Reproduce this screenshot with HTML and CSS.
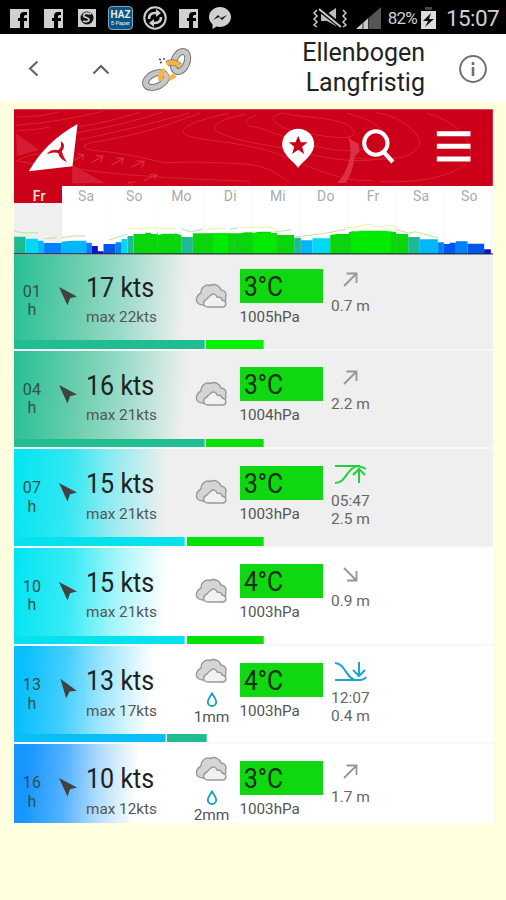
FILE: index.html
```html
<!DOCTYPE html>
<html lang="de">
<head>
<meta charset="utf-8">
<title>Ellenbogen Langfristig</title>
<link rel="stylesheet" href="styles.css">
</head>
<body>
<svg class="defs" width="0" height="0">
  <symbol id="fb" viewBox="0 0 19 19"><path fill="#d0d0d0" d="M0 0h19v19h-5v-7h3V9h-3V7.500q0-1.500 1.500-1.500H17V3h-3q-4 0-4 4v2H8v3h2v7H0z"/></symbol>
  <symbol id="wind" viewBox="0 0 20 20"><path fill="#404342" d="M1 1 19 10.500 12 12.300 9.500 19.500Z"/></symbol>
  <symbol id="cloud" viewBox="0 0 34 26"><path d="M8 22C3 22 1 19 1.500 16S4 11 6 10C6 4 11 1 15 2.500 20 0 25 3 26 7c4 0 6 4 4.500 7 1 4-1 7-4 8Z" fill="#d5d5d5" stroke="#999" stroke-width="1.400"/><path d="M13 24c-5 0-6-6-1-8 1-2 3-3 4-4 2-2 5-1 6 2 3 0 5 1 5 3 5 1 5 6 1 7Z" fill="#f1f1f1" stroke="#999" stroke-width="1.400"/></symbol>
  <symbol id="up" viewBox="0 0 15 15"><path d="M1 14 13.500 1.500M3.500 1.500h10V11" fill="none" stroke="#969696" stroke-width="1.800"/></symbol>
  <symbol id="down" viewBox="0 0 15 15"><path d="M1 1 13.500 13.500M13.500 4v9.500H4" fill="none" stroke="#969696" stroke-width="1.800"/></symbol>
  <symbol id="high" viewBox="0 0 33 21"><path d="M1 2h25M1 19c10 0 11-11 18-15 4-3 8-2 13 1M25 19V5M19 11l6-6 6 6" fill="none" stroke="#20d13a" stroke-width="2"/></symbol>
  <symbol id="low" viewBox="0 0 33 21"><path d="M1 2c10 0 12 17 21 17M1 19h25q4 0 6-3M25 1v14M19 9l6 6 6-6" fill="none" stroke="#1ba5cc" stroke-width="2"/></symbol>
  <symbol id="drop" viewBox="0 0 12 15"><path d="M6 1.500C4 5 1.800 7 1.800 10a4.200 4 0 0 0 8.400 0C10.200 7 8 5 6 1.500Z" fill="none" stroke="#169fc4" stroke-width="1.800"/></symbol>
</svg>

<div class="status">
  <div class="notes">
    <svg width="19" height="19"><use href="#fb"/></svg>
    <svg width="19" height="19"><use href="#fb"/></svg>
    <svg class="small" width="18" height="18" viewBox="0 0 18 18"><path fill="#d0d0d0" d="M0 0h18v18H0z"/><circle cx="9" cy="9" r="6.500" fill="#111"/><path d="M13 5Q6 3 5.500 6.500C5.500 9 11.500 8 11 11 10.500 13 7 13 5 12" fill="none" stroke="#d0d0d0" stroke-width="1.800"/></svg>
    <div class="haz"><b>HAZ</b><span>E-Paper</span></div>
    <svg width="24" height="24" viewBox="0 0 24 24"><circle cx="12" cy="12" r="10.700" fill="none" stroke="#d0d0d0" stroke-width="2"/><path d="M6 13q0-6 6-6h3M18 11q0 6-6 6H9" fill="none" stroke="#d0d0d0" stroke-width="2.600"/><path d="m13 3 5 4-5 4zM11 13l-5 4 5 4z" fill="#d0d0d0"/></svg>
    <svg width="19" height="19"><use href="#fb"/></svg>
    <svg class="messenger" width="22" height="22" viewBox="0 0 22 22"><path fill="#d0d0d0" d="M11 0C5 0 0 4.500 0 10c0 3 1.500 5.500 3.500 7.300V22l4-2.500c7 2 14.500-2.500 14.500-9.500C22 4.500 17 0 11 0"/><path d="m4 13 5-5 3 3 6-3-5 5-3-3z" fill="#111"/></svg>
  </div>
  <div class="state">
    <svg width="34" height="20" viewBox="0 0 34 20"><path d="M8 6h6l9-6v18l-9-5H8z" fill="#bbb"/><path d="m5 0 24 19" stroke="#000" stroke-width="5"/><path d="m6 1 22 18" stroke="#c9c9c9" stroke-width="2"/><path d="m4 2-3 3 3 3-3 3 3 3-3 3 3 2M30 2l3 3-3 3 3 3-3 3 3 3-3 2" fill="none" stroke="#c9c9c9" stroke-width="1.500"/></svg>
    <svg width="25" height="22" viewBox="0 0 25 22"><path d="M0 22 25 0v22z" fill="#555"/><path d="M0 22 13 10.500V22z" fill="#c9c9c9"/><path d="M7 15v7M12.500 11v11" stroke="#333" stroke-width="1"/></svg>
    <span class="percent">82%</span>
    <svg class="battery" width="15" height="22" viewBox="0 0 15 22"><path fill="#444" d="M4 0h7v3H4z"/><path fill="#ddd" d="M0 4h15v18H0z"/><path fill="#111" d="m10 6-8 8h5l-3 6 9-8H8z"/></svg>
    <span class="clock">15:07</span>
  </div>
</div>

<div class="appbar">
  <svg class="back" width="11" height="17" viewBox="0 0 11 17"><path d="M9.500 1.500 2 8.500l7.500 7" fill="none" stroke="#666" stroke-width="2.200"/></svg>
  <svg class="top" width="18" height="11" viewBox="0 0 18 11"><path d="m1.500 9.500 7.500-7.500 7.500 7.500" fill="none" stroke="#666" stroke-width="2.200"/></svg>
  <svg class="chain" width="50" height="44" viewBox="0 0 50 44"><g fill="none"><ellipse cx="38.500" cy="14.500" rx="6.500" ry="10.500" transform="rotate(22 38.500 14.500)" stroke="#777" stroke-width="7"/><ellipse cx="38.500" cy="14.500" rx="6.500" ry="10.500" transform="rotate(22 38.500 14.500)" stroke="#c6c6c6" stroke-width="5"/><ellipse cx="14" cy="33" rx="11" ry="6.500" transform="rotate(-24 14 33)" stroke="#777" stroke-width="7"/><ellipse cx="14" cy="33" rx="11" ry="6.500" transform="rotate(-24 14 33)" stroke="#c6c6c6" stroke-width="5"/><path d="M25 17q6-4 13 2" stroke="#a37630" stroke-width="6"/><path d="M25 17q6-4 13 2" stroke="#f7b34b" stroke-width="4.500"/><path d="M19 34q-2-8 4-11M27 32l6-4" stroke="#f7b34b" stroke-width="5"/><path d="m22 18 7 10" stroke="#fff" stroke-width="3"/><path d="m17 12 2 1M22 11v2M18 16l2-1" stroke="#555" stroke-width="1.500"/></g></svg>
  <div class="title">Ellenbogen<br>Langfristig</div>
  <svg class="info" width="30" height="30" viewBox="0 0 30 30"><circle cx="15" cy="15" r="12.900" fill="none" stroke="#707070" stroke-width="2"/><path d="M15 8v3M15 13v9" stroke="#707070" stroke-width="2.600"/></svg>
</div>

<main class="panel">
  <svg class="brand" viewBox="43.500 26 1435.500 231" preserveAspectRatio="none">
    <path fill="#cd0019" d="M43 26h1437v231H43z"/>
    <path d="M43 27h1437" stroke="#d94a50" stroke-width="4"/>
    <g fill="none" stroke="#df3449" stroke-width="2.500" opacity=".8">
      <path d="M50 50q70 0 130-16M50 75q130-10 260-42M50 92q70-5 100-12M230 80q90-12 190-44M228 98q150-25 260-62M240 118q150-30 330-80M600 38C470 90 380 110 270 128q-40 12 10 22C400 160 450 180 500 187q110-5 250 5 70 10 120 56"/>
      <path d="M690 38q-140 30-140 56c10 25 120 25 210 46 120 25 180 80 310 100h50"/>
      <path d="M740 42c-60 10-110 30-90 50 70 40 180 40 280 70 90 20 200 30 240 0M770 45c-40 10-40 35 0 35 70 20 240 100 340 60"/>
      <path d="M850 38c-60 10-20 50 70 60 100 20 160 20 140-10-30-40-160-35-210-50M1040 38c100 25 130 60 100 85"/>
      <path d="M1130 37c70 10 130 55 130 95-20 50-110 50-200 40M1280 38c130 35 160 130 110 160-60 40-160 50-250 45"/>
      <path d="M52 182q50-30 90-18M52 182q50 8 90 16M230 205q150 25 520 38"/>
    </g>
    <path d="M50 100l70 48-68 20zM218 195l100 54H218z" fill="#d51c34"/>
    <g fill="none" stroke="#e0384c" stroke-width="3"><path d="m226 180 25-16m-16-2 18 1-4 15M276 187l35-20m-22-1 22 1-8 18M336 194l37-20m-22-1 22 1-8 18M396 200l38-17m-23-1 24 1-9 18M433 241l38-17m-22-1 23 1-9 14M385 248l22-4"/></g>
    <path d="M1033 84c11 28 24 38 44 46l3 24-14 14c-5 36-14 60-28 80h-24c28-34 38-64 39-98-1-26-8-46-20-66Z" fill="#de2f43"/>
    <path d="M234 71Q136 126 88 213l131-15Z" fill="#fff"/>
    <path d="M183 122q20 10 4 32q6 18 15 32q-22-10-26-28q-16-4-34 4q10-16 35-13q12-12 6-27Z" fill="#c41020"/>
    <g transform="translate(5 0)"><path d="M891 203c-10-17-48-39-48-71a48 47 0 0 1 96 0c0 32-38 54-48 71Z" fill="#fff"/>
    <path d="m891 106 8 20h20l-16 13 6 22-18-13-18 13 6-22-16-13h20z" fill="#cd0019"/></g>
    <circle cx="1129" cy="128" r="35" fill="none" stroke="#fff" stroke-width="12"/><path d="m1151 153 29 32" stroke="#fff" stroke-width="13"/>
    <path d="M1312 100h101M1312 138h101M1312 176h101" stroke="#fff" stroke-width="15"/>
  </svg>

  <div class="days">
    <div class="day today"><span><em>Fr</em></span></div><div class="day"><em>Sa</em></div><div class="day"><em>So</em></div><div class="day"><em>Mo</em></div><div class="day"><em>Di</em></div><div class="day"><em>Mi</em></div><div class="day"><em>Do</em></div><div class="day"><em>Fr</em></div><div class="day"><em>Sa</em></div><div class="day"><em>So</em></div>
    <svg class="chart" viewBox="43.500 308 1435.500 158" preserveAspectRatio="none">
      <path fill="#1fba94" d="M44 412h34v52H44zM384 410h18v54h-18zM545 413h35v51h-35zM884 415h20v49h-20zM1226 413h35v51h-35z"/>
      <path fill="#00d8f5" d="M78 418h37v46H78zM366 419h18v45h-18zM939 417h53v47h-53z"/>
      <path fill="#00b7fa" d="M115 424h17v40h-17zM186 427l30-3h44v40h-74zM904 423h35v41h-35zM1261 420h54v44h-54z"/>
      <path fill="#0080fa" d="M132 431h54v33h-54zM260 430h17v34h-17zM348 429h18v35h-18zM1315 429h18v35h-18zM1369 426h35v38h-35z"/>
      <path fill="#0055ee" d="M312 434h36v30h-36zM1333 434h18v30h-18zM1351 430h18v34h-18zM1404 433h50v31h-50z"/>
      <path fill="#1010cd" d="M277 440h18v24h-18zM295 456h17v8h-17zM1454 450h20v14h-20z"/>
      <path fill="#08d60b" d="M402 404h35v-4h18v4h19v3l18-4h38l15 4v57H402zM580 402h145l10-3h24v65H580zM759 401l20-4h35v4h18v6h52v57h-125zM992 407l20-3h36v-6h30v-4h84v3h28v7h36v60H992z"/>
      <path fill="#00eb00" d="M640 402h45v62h-45zM760 402h72v62h-72zM1055 396h120v68h-120z"/>
      <path d="M474 400v64M529 400v64M617 402v62M705 402v62M832 405v59M1025 404v60M1055 398v66M1190 402v62" stroke="#39c43e" stroke-width="2"/>
      <path d="M44 395l22 5h50M135 418l35-3M186 415l40-5h32M330 422l52-17M545 388l30 10 35-9M690 390l25-4M825 398l50-7M890 412l80-9 70-13M1188 390l40 12 20-5 70 19" fill="none" stroke="#b4e8a4" stroke-width="3"/>
      <path d="M384 388l90-3 55 4M620 390l60-3M725 384h90l25 13M1035 385l30-1 40-10 20 6h15l8 5 10-6 15-1 20 8" fill="none" stroke="#eef2a0" stroke-width="3"/>
      <path d="M43 463.500h1437" stroke="#222c32" stroke-width="4"/>
    </svg>
  </div>

  <div class="rows">
    <section class="row night teal">
      <div class="hour">01<br>h</div><svg class="wind" width="20" height="20"><use href="#wind"/></svg>
      <div class="speed"><strong>17 kts</strong><span>max 22kts</span></div>
      <div class="sky"><svg width="34" height="26"><use href="#cloud"/></svg></div>
      <div class="air"><strong><span>3°C</span></strong><span>1005hPa</span></div>
      <div class="tide"><svg class="dir" width="15" height="15"><use href="#up"/></svg><span>0.7 m</span></div>
      <div class="bars"><i class="b-teal w17"></i><i class="b-lime g17"></i></div>
    </section>
    <section class="row night teal">
      <div class="hour">04<br>h</div><svg class="wind" width="20" height="20"><use href="#wind"/></svg>
      <div class="speed"><strong>16 kts</strong><span>max 21kts</span></div>
      <div class="sky"><svg width="34" height="26"><use href="#cloud"/></svg></div>
      <div class="air"><strong><span>3°C</span></strong><span>1004hPa</span></div>
      <div class="tide"><svg class="dir" width="15" height="15"><use href="#up"/></svg><span>2.2 m</span></div>
      <div class="bars"><i class="b-teal w17"></i><i class="b-green g17"></i></div>
    </section>
    <section class="row night cyan">
      <div class="hour">07<br>h</div><svg class="wind" width="20" height="20"><use href="#wind"/></svg>
      <div class="speed"><strong>15 kts</strong><span>max 21kts</span></div>
      <div class="sky"><svg width="34" height="26"><use href="#cloud"/></svg></div>
      <div class="air"><strong><span>3°C</span></strong><span>1003hPa</span></div>
      <div class="tide"><svg class="turn" width="33" height="21"><use href="#high"/></svg><span>05:47</span><span>2.5 m</span></div>
      <div class="bars"><i class="b-cyan w15"></i><i class="b-green g15"></i></div>
    </section>
    <section class="row cyan">
      <div class="hour">10<br>h</div><svg class="wind" width="20" height="20"><use href="#wind"/></svg>
      <div class="speed"><strong>15 kts</strong><span>max 21kts</span></div>
      <div class="sky"><svg width="34" height="26"><use href="#cloud"/></svg></div>
      <div class="air"><strong><span>4°C</span></strong><span>1003hPa</span></div>
      <div class="tide"><svg class="dir" width="15" height="15"><use href="#down"/></svg><span>0.9 m</span></div>
      <div class="bars"><i class="b-cyan w15"></i><i class="b-green g15"></i></div>
    </section>
    <section class="row sky-blue">
      <div class="hour">13<br>h</div><svg class="wind steep" width="20" height="20"><use href="#wind"/></svg>
      <div class="speed"><strong>13 kts</strong><span>max 17kts</span></div>
      <div class="sky rain"><svg width="34" height="26"><use href="#cloud"/></svg><svg class="drop" width="12" height="15"><use href="#drop"/></svg><span>1mm</span></div>
      <div class="air"><strong><span>4°C</span></strong><span>1003hPa</span></div>
      <div class="tide"><svg class="turn" width="33" height="21"><use href="#low"/></svg><span>12:07</span><span>0.4 m</span></div>
      <div class="bars"><i class="b-blue w13"></i><i class="b-teal g13"></i></div>
    </section>
    <section class="row blue">
      <div class="hour">16<br>h</div><svg class="wind" width="20" height="20"><use href="#wind"/></svg>
      <div class="speed"><strong>10 kts</strong><span>max 12kts</span></div>
      <div class="sky rain"><svg width="34" height="26"><use href="#cloud"/></svg><svg class="drop" width="12" height="15"><use href="#drop"/></svg><span>2mm</span></div>
      <div class="air"><strong><span>3°C</span></strong><span>1003hPa</span></div>
      <div class="tide"><svg class="dir" width="15" height="15"><use href="#up"/></svg><span>1.7 m</span></div>
    </section>
  </div>
</main>
</body>
</html>
```

FILE: styles.css
```css
* { box-sizing: border-box; }
body { margin: 0; width: 506px; height: 900px; overflow: hidden; background: #ffffdf; font-family: Roboto, "Liberation Sans", sans-serif; }
svg { display: block; flex: none; }
.defs { position: absolute; }

.status { height: 34px; background: #000; color: #d0d0d0; display: flex; justify-content: space-between; align-items: center; padding: 2px 6px 0 10px; }
.notes { display: flex; align-items: center; gap: 15px; }
.notes .small { margin-right: -3px; }
.notes .messenger { margin-left: -4.500px; }
.haz { width: 25px; height: 24px; margin-right: -5px; border: 1px solid #7baac4; border-radius: 4px; background: #0d5482; color: #e3eef5; text-align: center; }
.haz b { display: block; font-size: 10px; line-height: 11px; margin-top: 2px; }
.haz span { display: block; font-size: 5.5px; line-height: 7px; }
.notes > svg:nth-child(6) { margin-left: -3px; }
.notes { margin-top: 0; }
.state { display: flex; align-items: center; }
.state svg:first-child { margin-right: 0; }
.state svg + svg { margin-left: 9px; }
.percent { font-size: 17px; letter-spacing: -.8px; margin-left: 7px; }
.state .battery { margin-left: 4px; }
.clock { font-size: 22.500px; letter-spacing: -.6px; margin-left: 10px; width: 54px; white-space: nowrap; }

.appbar { height: 67px; background: #fff; display: flex; align-items: flex-start; padding-left: 28px; }
.back { margin-top: 26px; }
.top { margin: 30px 0 0 53px; }
.chain { margin: 13px 0 0 32px; }
.title { width: 233px; padding-top: 4px; text-align: right; font-size: 25px; line-height: 30px; color: #222; }
.info { margin: 20px 0 0 33px; }

.panel { width: 478.5px; height: 714.5px; margin: 7.5px 0 0 14px; overflow: hidden; background: #fff; }
.brand { width: 100%; height: 77px; }
.days { position: relative; z-index: 1; height: 69.5px; display: grid; grid-template-columns: repeat(10, 1fr); background: #fff; }
.day { font-size: 15.500px; line-height: 21px; height: 68px; color: #aaa; text-align: center; border-right: 1px solid #f7f7f7; }
.day em { display: inline-block; font-style: normal; transform: translateX(1px) scaleX(.9); letter-spacing: .3px; }
.today { color: #ffe3e3; background: #eeefee; border: 0; }
.today span { display: block; height: 17px; background: #cd0019; font-weight: 500; }
.chart { position: absolute; left: 0; bottom: 0; width: 100%; height: 52.700px; }

.rows { margin-top: -4.500px; }
.row { position: relative; height: 98.400px; display: grid; grid-template-columns: 36px 36px 106px 47.500px 91.500px 1fr; background-color: #fff; border-top: 2px solid #f8f8f8; color: #555; }
.night { background-color: #efefef; }
.teal { background-image: linear-gradient(94deg, #25bf94 0, #6dceaf 14%, rgba(37, 191, 148, .42) 23%, rgba(37, 191, 148, 0) 36%); }
.cyan { background-image: linear-gradient(94deg, #00e5f2 0, rgba(0, 229, 242, .78) 12%, rgba(0, 229, 242, .38) 21%, rgba(0, 229, 242, 0) 32%); }
.sky-blue { background-image: linear-gradient(94deg, #08bffd 2%, rgba(8, 191, 253, .76) 11%, rgba(8, 191, 253, .38) 19%, rgba(8, 191, 253, 0) 29%); }
.blue { background-image: linear-gradient(94deg, #1696ff 3%, rgba(22, 150, 255, .73) 11%, rgba(22, 150, 255, .33) 18%, rgba(22, 150, 255, 0) 26%); }
.hour { font-size: 16px; line-height: 18.500px; padding-top: 30px; text-align: center; color: #31504d; letter-spacing: .2px; }
.wind { margin: 33px 0 0 8px; }
.steep { transform: rotate(8deg); }
.speed { display: flex; flex-direction: column; white-space: nowrap; }
.speed strong { font-weight: 400; font-size: 28px; line-height: 32px; margin-top: 19px; color: #1d2222; transform: scaleX(.895); transform-origin: left; }
.speed span { font-size: 15.300px; line-height: 18px; margin-top: 4.500px; }
.sky { padding-top: 30px; display: flex; flex-direction: column; align-items: center; width: 39px; }
.rain { padding-top: 12px; }
.drop { margin-top: 8px; }
.sky span { font-size: 15.500px; line-height: 16px; margin-top: 2px; letter-spacing: -.1px; }
.air { display: flex; flex-direction: column; }
.air strong { width: 83px; height: 34px; margin-top: 16.500px; background: #10d810; color: #162b16; font-weight: 400; font-size: 28px; line-height: 35px; padding-left: 4px; }
.air strong span { display: block; transform: scaleX(.88); transform-origin: left; }
.air > span { font-size: 15.200px; line-height: 18px; margin-top: 5px; color: #555; }
.tide { display: flex; flex-direction: column; font-size: 15.500px; line-height: 18.200px; color: #666; }
.dir { margin: 19.500px 0 9.500px 12px; }
.turn { margin: 15px 0 7px 3px; }
.bars { position: absolute; left: 0; bottom: 0; height: 8.500px; display: flex; gap: 1.500px; }
.bars i { border-right: 1px solid rgba(255, 255, 255, .3); }
.w17 { width: 190.500px; } .g17 { width: 58px; }
.w15 { width: 171px; } .g15 { width: 77.500px; }
.w13 { width: 151.500px; } .g13 { width: 39.500px; }
.b-teal { background: #1fbd91; }
.b-lime { background: #04f304; }
.b-green { background: #08e108; }
.b-cyan { background: #06e1ee; }
.b-blue { background: #09bdf9; }
```
